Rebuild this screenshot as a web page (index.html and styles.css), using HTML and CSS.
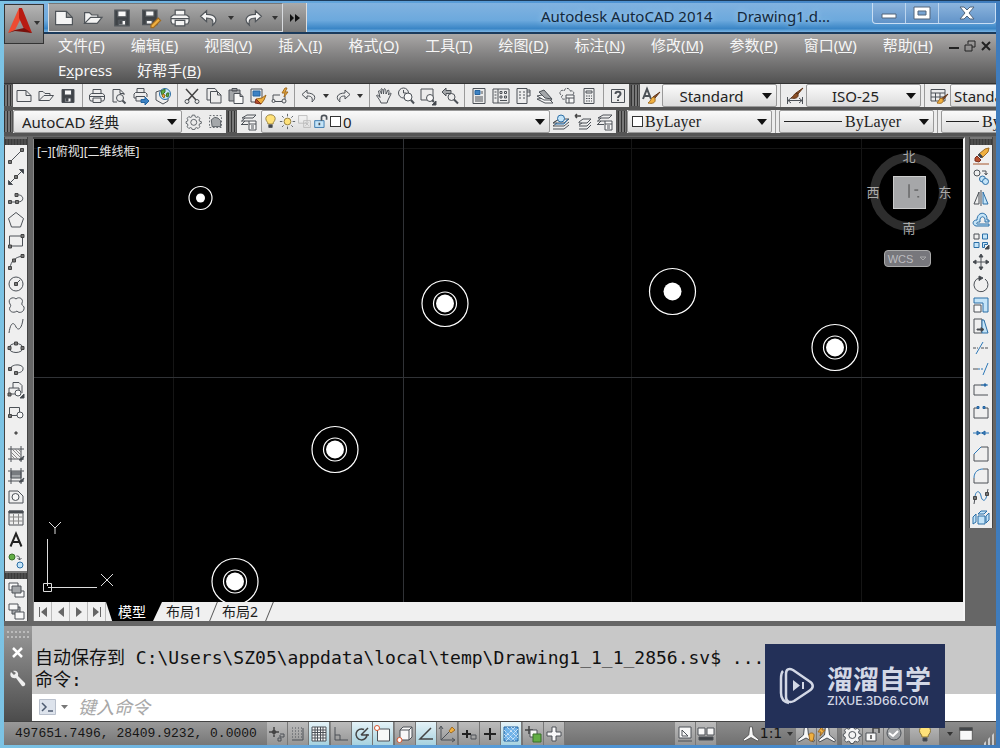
FILE: index.html
```html
<!DOCTYPE html>
<html lang="zh-CN">
<head>
<meta charset="utf-8">
<title>Autodesk AutoCAD 2014</title>
<link rel="stylesheet" href="styles.css">
</head>
<body>
<svg class="sprite" aria-hidden="true">
  <symbol id="new" viewBox="0 0 20 20"><path d="M3 4.500h9l5 5v6H3zM12 4.500v5h5"/></symbol>
  <symbol id="open" viewBox="0 0 20 20"><path d="M3 14.500v-9h4l2 2h5v2M3 14.500l5-5h9.500l-4 5z"/></symbol>
  <symbol id="save" viewBox="0 0 20 20"><path class="dark" d="M4 3.500h12v13H4z"/><path class="white" d="M6.500 4h7v5h-7zM7 12h6v4H7z"/><path class="dark" d="M8 12h2v3H8z"/></symbol>
  <symbol id="saveas" viewBox="0 0 20 20"><path class="dark" d="M3 3.500h12v12H3z"/><path class="white" d="M5.500 4h7v4.500h-7zM6 12h5v3H6z"/><path class="gold" d="M10 16l6-6 2 2-6 6h-2z"/></symbol>
  <symbol id="print" viewBox="0 0 20 20"><path d="M6 8V3.500h8V8M6 15H3.500L2.500 13V9l2-1.500h11l2 1.500v4l-1 2H14M6 12h8v4.500H6zM3 10.500h14"/></symbol>
  <symbol id="preview" viewBox="0 0 20 20"><path d="M8 16H4V3.500h7l4 4V9M11 3.500v4h4"/><circle cx="11" cy="12" r="3.500"/><path class="thick" d="M13.500 14.500l3 3"/></symbol>
  <symbol id="publish" viewBox="0 0 20 20"><path d="M6 7V2.500h7V7M5 12H3V8l1.500-1.500h10L16 8v3M5 10.500h9M5 10.500V15h5"/><path class="bluefill" d="M10 13.500h4V11l4 4-4 4v-2.500h-4z"/></symbol>
  <symbol id="globe" viewBox="0 0 20 20"><path d="M3 6l6-2 6 4v7l-5 3-7-4z"/><circle class="sky" cx="12" cy="8" r="5.500"/><path class="greenfill" d="M8 5l4-2v3l-3 3zM14 7l2 0-1 4-2-1z"/><path class="gold" d="M10 8l2 1-1 3-2-2z"/></symbol>
  <symbol id="cut" viewBox="0 0 20 20"><path class="med" d="M4 3l10 11M16 3L6 14"/><circle cx="5" cy="15.500" r="2"/><circle cx="15" cy="15.500" r="2"/></symbol>
  <symbol id="copy" viewBox="0 0 20 20"><path d="M6 14H3V2.500h8L13 5M6.500 5.500h7l3.500 3.500v8H6.500zM13.500 5.500V9H17"/></symbol>
  <symbol id="paste" viewBox="0 0 20 20"><path class="grey" d="M3 4h11v11H3z"/><path d="M6 2.500h5V5H6z"/><path class="white" d="M8 7.500h6l3 3v7H8zM14 7.500v3h3"/></symbol>
  <symbol id="match" viewBox="0 0 20 20"><path d="M3 3h11v13H3z"/><path class="bluefill" d="M5 5h7v5H5z"/><path class="gold" d="M8 13l6-1 4-3-2 5-3 4z"/><path class="red" d="M8 13l5 5-6-1z"/></symbol>
  <symbol id="blockedit" viewBox="0 0 20 20"><path d="M3 14V9h7M5 15.500h7M15 10v3"/><circle cx="3.500" cy="15" r="1.500"/><circle cx="14" cy="15" r="2"/><path class="gold" d="M15 2l-3 5h3l-1 4 4-5h-3l2-4z"/></symbol>
  <symbol id="undo" viewBox="0 0 20 20"><path d="M8 4L3 8.500 8 13v-3c4 0 6 1 5 6 5-4 3-9-5-9z"/></symbol>
  <symbol id="redo" viewBox="0 0 20 20"><path d="M12 4l5 4.500-5 4.500v-3c-4 0-6 1-5 6-5-4-3-9 5-9z"/></symbol>
  <symbol id="pan" viewBox="0 0 20 20"><path d="M7 17c-1-3-3-5-4.500-7.500 1-1 2 0 3.500 2L4.500 5c1-1 2 0 3 3L7 3c1-1 2 0 2.500 5l.5-5c1-1 2 0 2 5l2-4c1.500 0 1 2 .5 5l2-2c1 0 .5 1-.5 3l-2 4-1 3z"/></symbol>
  <symbol id="zoomrt" viewBox="0 0 20 20"><circle cx="7.500" cy="7" r="5"/><path d="M7.500 4v3h3"/><circle class="white" cx="12" cy="11" r="4"/><path class="thick" d="M15 14l3 3.500"/></symbol>
  <symbol id="zoomwin" viewBox="0 0 20 20"><path d="M3 3h12v11H3z"/><circle class="white" cx="12" cy="12" r="3.500"/><path class="thick" d="M14 14l2 2"/><path class="dark" d="M18 15v4h-4z"/></symbol>
  <symbol id="zoomprev" viewBox="0 0 20 20"><path class="grey" d="M2 6l4-4v2.500h5v3H6V10z"/><circle cx="11.500" cy="11" r="3.500"/><path class="thick" d="M14 13.500l4 4"/></symbol>
  <symbol id="props" viewBox="0 0 20 20"><path d="M4 2.500h12v15H4z"/><path class="bluefill" d="M6 4.500h5v4H6z"/><path d="M13 5v3M6 11h8M6 13h8M6 15h8"/></symbol>
  <symbol id="dc" viewBox="0 0 20 20"><path d="M2 3h16v14H2zM7 3v14M3.500 6h2M3.500 9h2M3.500 12h2M9 5.500h2v2H9zM13.500 5.500h2v2h-2zM9 10h2v2H9zM13.500 10h2v2h-2zM9 14.500h7"/></symbol>
  <symbol id="palette" viewBox="0 0 20 20"><path d="M4 2.500h10v15H4zM6 6h2M10 6h2M6 9h2M10 9h2M6 12h2M10 12h2M14 4h3v6h-3M14 6h3"/></symbol>
  <symbol id="sheets" viewBox="0 0 20 20"><path class="white" d="M2 13l8 4h8l-5-5z"/><path class="white" d="M2 10l7 4h8L12 8z"/><path class="grey" d="M4 6l6 6 7 1-8-9z"/></symbol>
  <symbol id="markup" viewBox="0 0 20 20"><path d="M4 9c-3-3 1-6 3-4 1-4 6-3 6 0 4-1 5 3 2 4M6 9c-3 2-1 5 2 4" stroke-dasharray="3 1"/><path class="white" d="M9 9h8v8H9zM9 12h8M12 12v5"/></symbol>
  <symbol id="calc" viewBox="0 0 20 20"><path d="M5 2.500h10v15H5zM7 5h6v2H7z"/><path d="M7 10h1.500M9.500 10H11M12 10h1M7 12.500h1.500M9.500 12.500H11M12 12.500h1M7 15h1.500M9.500 15H11M12 15h1"/></symbol>
  <symbol id="help" viewBox="0 0 20 20"><path d="M3.500 3.500h13v13h-13z"/><path class="thick" d="M7.500 8c0-3 5-3 5 0 0 2-2.500 1.500-2.500 4M10 13.500v1.500"/></symbol>
  <symbol id="textstyle" viewBox="0 0 20 20"><path class="thick" d="M2 13L6 3l4 10M3.500 10h5"/><path class="brown" d="M19 6l-5 6-2-1z"/><path class="gold" d="M14 12l-2-1c-2 1-2 4-5 6 4 1 8 0 7-4z"/></symbol>
  <symbol id="dimstyle" viewBox="0 0 20 20"><path d="M2.500 11v7M17.500 11v7M3 14.500h14M6 12l-3 2.500L6 17M14 12l3 2.500-3 2.500"/><path class="brown" d="M18 2l-5 6-2-1zM13 8l-2-1c-2 1-3 4-5 5 4 1 8 0 7-4z"/></symbol>
  <symbol id="tablestyle" viewBox="0 0 20 20"><path d="M2 3.500h14V15H2zM2 7h14M6.500 7v8M11 7v8M2 11h14"/><path class="brown" d="M19 8l-5 6-2-1z"/><path class="gold" d="M14 13l-2-1c-2 1-2 3-4 5 4 1 7 0 6-4z"/></symbol>
  <symbol id="gear" viewBox="0 0 20 20"><path d="M8.500 2.500h3l.5 2 1.500.7 2-1 2 2-1 2 .7 1.500 2 .5v2l-2 .5-.7 1.500 1 2-2 2-2-1-1.500.7-.5 1.600h-3l-.5-1.600-1.500-.7-2 1-2-2 1-2-.7-1.500-1.500-.5v-2l1.500-.5.7-1.500-1-2 2-2 2 1L8 4.500z"/><circle cx="10.300" cy="11" r="3.500"/></symbol>
  <symbol id="wsave" viewBox="0 0 20 20"><path d="M3 3h14v14H3z" stroke-dasharray="2 2"/><path class="grey" d="M5 8l4-3 4 1 3 3v7H6z"/></symbol>
  <symbol id="layers" viewBox="0 0 20 20"><path d="M8 3l-5 3h11l3-3zM3 9h7M6 6L2 9.500M3 12.500h6M6 9l-4 4"/><path class="white" d="M10 9h7v9h-7zM10 12h7M12 14h3M12 16h3"/></symbol>
  <symbol id="layercur" viewBox="0 0 20 20"><path d="M2 17h11l5-4M2 14h11l5-4M2 14l4-3M2 11h11l5-4H8l-6 4zM8 7l-6 4"/><circle class="sky" cx="10" cy="6.500" r="3.500"/><path class="blue" d="M4 12h9l4-5"/></symbol>
  <symbol id="layerprev" viewBox="0 0 20 20"><path class="med" d="M2 4h6M2 4l2-2M2 4l2 2"/><path d="M6 10l4-3h8l-4 4H6zM6 13l3-2M6 14h8l4-4M6 17h8l4-4"/></symbol>
  <symbol id="bulb" viewBox="0 0 20 20"><path class="yellow" d="M7 13c0-3-2.500-3-2.500-6.500 0-6 11-6 11 0C15.500 10 13 10 13 13z"/><path class="dark" d="M8 14h4v3H8z"/></symbol>
  <symbol id="sun" viewBox="0 0 20 20"><circle class="yellow" cx="10" cy="10" r="4"/><path d="M10 1v3M10 16v3M1 10h3M16 10h3M3.500 3.500l2 2M14.500 14.500l2 2M16.500 3.500l-2 2M3.500 16.500l2-2"/></symbol>
  <symbol id="freeze" viewBox="0 0 20 20"><path class="faint" d="M3 3h10v9H3zM9 9h8v8H9zM11 11l4 4M15 11l-4 4"/></symbol>
  <symbol id="unlock" viewBox="0 0 20 20"><path class="sky" d="M2 9h11v8H2z"/><path class="thick" d="M10 9V5c0-3 6-3 6 0v3M7.500 11.500v3"/></symbol>
  <symbol id="line" viewBox="0 0 20 20"><path d="M4 16L16 4"/><path class="node" d="M2.500 14.500h3v3h-3zM14.500 2.500h3v3h-3z"/></symbol>
  <symbol id="xline" viewBox="0 0 20 20"><path d="M4 16L16 4"/><path class="dark" d="M2.500 17.500v-4l4 4zM17.500 2.500v4l-4-4z"/><path class="node" d="M8.500 8.500h3v3h-3z"/></symbol>
  <symbol id="pline" viewBox="0 0 20 20"><path d="M4 14h8c7 0 6-8-1-7"/><path class="node" d="M2.500 12.500h3v3h-3zM9 5.500h3v3H9zM9.500 12.500h3v3h-3z"/></symbol>
  <symbol id="polygon" viewBox="0 0 20 20"><path d="M10 2.500l7.500 6-3 8.500h-9l-3-8.500z"/></symbol>
  <symbol id="rect" viewBox="0 0 20 20"><path d="M3.500 5h13v10h-13z"/><path class="node" d="M2.500 14h3v3h-3zM15 3.500h3v3h-3z"/></symbol>
  <symbol id="arc" viewBox="0 0 20 20"><path d="M4 16c1-7 5-11 13-12"/><path class="node" d="M2.500 14.500h3v3h-3zM6.500 7h3v3h-3zM15 2.500h3v3h-3z"/></symbol>
  <symbol id="circle" viewBox="0 0 20 20"><circle cx="10" cy="10" r="7"/><path d="M10 10l4-4"/><path class="node" d="M8.500 8.500h3v3h-3z"/></symbol>
  <symbol id="cloud" viewBox="0 0 20 20"><path d="M10 4c3-3 8 0 6 4-1 2 1 2 2 4 1 5-5 7-7 4-4 3-9 0-7-4 1-1 1-1 0-3-3-5 3-8 6-5z"/></symbol>
  <symbol id="spline" viewBox="0 0 20 20"><path d="M3 17c2-14 6-9 7-6 3 5 6 0 7-8"/></symbol>
  <symbol id="ellipse" viewBox="0 0 20 20"><ellipse cx="10" cy="10" rx="7" ry="4.500"/><path class="node" d="M2 8.500h3v3H2zM15 8.500h3v3h-3zM8.500 4h3v3h-3z"/></symbol>
  <symbol id="earc" viewBox="0 0 20 20"><path d="M4 10c2-6 14-5 13 0 0 3-4 4-7 4"/><path class="node" d="M2.500 8.500h3v3h-3zM8.500 12.500h3v3h-3z"/></symbol>
  <symbol id="insert" viewBox="0 0 20 20"><path d="M7 8V2.500h6l3 3V13M3 8h10v6H3z"/><circle class="white" cx="12" cy="13" r="3"/><path class="node" d="M2 13h3v3H2z"/><path class="dark" d="M18 14v4h-4z"/></symbol>
  <symbol id="block" viewBox="0 0 20 20"><path d="M3.500 5.500h10v8h-10z"/><circle class="white" cx="14" cy="13" r="3"/><path class="node" d="M2.500 12.500h3v3h-3z"/></symbol>
  <symbol id="point" viewBox="0 0 20 20"><path class="node" d="M9 9h2v2H9z"/></symbol>
  <symbol id="hatch" viewBox="0 0 20 20"><path d="M2 5h16M2 15h16M5 2v16M15 2v16"/><path class="thin" d="M5 8l7 7M5 11l4 4M6 5l9 9M9 5l6 6M12 5l3 3"/><path class="dark" d="M13 16l5-4-2 4z"/></symbol>
  <symbol id="gradient" viewBox="0 0 20 20"><path class="grey" d="M5 6h10v6H5z"/><path d="M2 5h16M2 15h16M5 2v16M15 2v16M5 8h10"/><path class="dark" d="M13 16l5-4-2 4z"/></symbol>
  <symbol id="region" viewBox="0 0 20 20"><path d="M3 4h9l5 5v7H3z"/><circle class="white" cx="9.500" cy="10" r="3.500"/></symbol>
  <symbol id="table" viewBox="0 0 20 20"><path class="dark" d="M3 3h14v2H3z"/><path d="M3 3h14v14H3z"/><path class="thin" d="M3.500 9h13M3.500 13h13M7.500 6v10.500M12.500 6v10.500"/></symbol>
  <symbol id="mtext" viewBox="0 0 20 20"><path class="bold" d="M4.500 16.500L10 3.500l5.500 13M6.500 12h7"/></symbol>
  <symbol id="addsel" viewBox="0 0 20 20"><circle class="greenfill" cx="6" cy="6" r="3"/><circle class="sky" cx="14" cy="14" r="3"/><path d="M10.500 5c3 0 3 1 3 4M11.500 7l2 2 2-2"/></symbol>
  <symbol id="order1" viewBox="0 0 20 20"><path class="white" d="M3 3h9v7H3zM9 11h9v6H9z"/><path class="grey" d="M6 6h9v7H6z"/></symbol>
  <symbol id="order2" viewBox="0 0 20 20"><path class="grey" d="M6 6h8v7H6z"/><path class="white" d="M3 3h9v6H3zM9 11h9v7H9z"/></symbol>
  <symbol id="erase" viewBox="0 0 20 20"><path class="gold" d="M8 8l6-5 4-1-1 4-6 6z"/><path class="dark" d="M7 9l3 3 1.500-1.500-3-3z"/><path class="red" d="M6 10l4 4-2 2-4-1v-3z"/><path class="brownline" d="M2 18h16"/></symbol>
  <symbol id="mcopy" viewBox="0 0 20 20"><circle cx="6" cy="6" r="3"/><circle class="sky" cx="11.500" cy="12" r="3"/><circle class="sky" cx="14.500" cy="14.500" r="3"/><path d="M11 4h4v3M13.500 6l1.500 2 1.500-2"/></symbol>
  <symbol id="mirror" viewBox="0 0 20 20"><path d="M8 4v12H3zM10 2v16"/><path class="sky" d="M12 4v12h5z"/></symbol>
  <symbol id="offset" viewBox="0 0 20 20"><path class="sky" d="M5 16c-4-1-4-6 1-6 0-9 11-9 10 0h2v2h-4c1-7-6-7-5 0-3 0-4 1-3 2h12v2z"/></symbol>
  <symbol id="array" viewBox="0 0 20 20"><path d="M3 3h5v5H3z"/><path class="sky" d="M11.500 3h5v5h-5zM3 11.500h5v5H3zM11.500 11.500h5v2h-3v3h-2z"/><path class="dark" d="M18 14v4h-4z"/></symbol>
  <symbol id="move" viewBox="0 0 20 20"><path d="M10 3v5M10 12v5M3 10h5M12 10h5"/><path class="dark" d="M10 2l2 3H8zM10 18l2-3H8zM2 10l3-2v4zM18 10l-3-2v4z"/><path d="M9 9h2v2H9z"/></symbol>
  <symbol id="rotate" viewBox="0 0 20 20"><path d="M8 4a7 7 0 1 0 6 1"/><path class="dark" d="M8 2l4 2-4 2.500z"/></symbol>
  <symbol id="scale" viewBox="0 0 20 20"><path class="sky" d="M3 3h14v14h-5V8H3z"/><path class="white" d="M3 10h7v7H3z"/></symbol>
  <symbol id="stretch" viewBox="0 0 20 20"><path d="M3 3h8v14H3z"/><path class="sky" d="M11 4h2l4 13h-6z"/><path class="dark" d="M6 13h4v-1.500l3 2-3 2V14H6z"/></symbol>
  <symbol id="trim" viewBox="0 0 20 20"><path d="M2 10h5M10 10h8" stroke-dasharray="3 1"/><path class="blue" d="M5 16l7-12"/></symbol>
  <symbol id="extend" viewBox="0 0 20 20"><path d="M2 10h5"/><path class="blue" d="M7 10h6" stroke-dasharray="2 1"/><path class="blue" d="M12 16l5-12"/></symbol>
  <symbol id="breakpt" viewBox="0 0 20 20"><path d="M12 5H3v10h14"/><path class="blue" d="M10 5h7"/><path class="bluefill" d="M13 4h2v2h-2z"/></symbol>
  <symbol id="break" viewBox="0 0 20 20"><path d="M6 6H3v10h14V6h-3"/><path class="bluefill" d="M6 4.500h2v2H6zM12 4.500h2v2h-2z"/></symbol>
  <symbol id="join" viewBox="0 0 20 20"><path class="blue" d="M2 10h16"/><path class="bluefill" d="M6 8l3 2-3 2zM14 8l-3 2 3 2z"/></symbol>
  <symbol id="chamfer" viewBox="0 0 20 20"><path d="M3 10v7h14V3h-7"/><path class="blue" d="M3 10l7-7"/></symbol>
  <symbol id="fillet" viewBox="0 0 20 20"><path d="M3 12v5h14V3h-5"/><path class="blue" d="M3 12c0-6 4-9 9-9"/></symbol>
  <symbol id="blend" viewBox="0 0 20 20"><path class="blue" d="M4 11c0-8 5-8 6-2s5 6 6-2"/><path d="M3 17l1-6M16 7l1-5"/><path class="node" d="M2.500 9.500h3v3h-3zM14.500 5.500h3v3h-3z"/></symbol>
  <symbol id="explode" viewBox="0 0 20 20"><path class="sky" d="M7 8h7v8H7zM7 6l3-3h6l-3 3zM15 8l3-3v7l-3 3zM2 9l3-3v8l-3 2z"/></symbol>
  <symbol id="infer" viewBox="0 0 20 20"><path class="med" d="M2 8h10M7 3v10M5 8l2-2 2 2-2 2z"/><path d="M13 10h4v3h-4M11 14h3v3h-3zM13 11v2"/></symbol>
  <symbol id="snap" viewBox="0 0 20 20"><path d="M4 4h10M4 7h10M4 10h10M4 13h10" stroke-dasharray="1 2"/><path d="M15 4v12H4"/></symbol>
  <symbol id="grid" viewBox="0 0 20 20"><path class="white" d="M3 3h14v14H3zM3 6h14M3 8.500h14M3 11h14M3 14h14M6 3v14M8.500 3v14M11.500 3v14M14 3v14"/></symbol>
  <symbol id="ortho" viewBox="0 0 20 20"><path d="M4 3v13h13M4 11h5v5"/></symbol>
  <symbol id="polar" viewBox="0 0 20 20"><path class="med" d="M15 10a5.500 5.500 0 1 1-3-4.500M9 11l7-7M9 11h8"/></symbol>
  <symbol id="osnap" viewBox="0 0 20 20"><path class="white" d="M4.500 5h12v12h-12z"/><circle class="orange" cx="4" cy="4" r="2.500"/></symbol>
  <symbol id="osnap3" viewBox="0 0 20 20"><path class="white" d="M5 6l3-3h9v10l-3 3H5zM5 6h9v10M14 6l3-3"/><circle class="orange" cx="4.500" cy="16" r="2.500"/></symbol>
  <symbol id="otrack" viewBox="0 0 20 20"><path class="med" d="M15 4L4 15h13"/></symbol>
  <symbol id="ducs" viewBox="0 0 20 20"><path d="M4 3v13h13M4 16l8-8M2 5l2-3 2 3M15 14l3 2-3 2"/><path class="gold" d="M12 7l3-4 3 3-4 3z"/></symbol>
  <symbol id="dyn" viewBox="0 0 20 20"><path class="bold" d="M3 10h9M8 6v8"/><path d="M12 11h5v4h-5z"/></symbol>
  <symbol id="plus" viewBox="0 0 20 20"><path class="bold" d="M4 10h12M10 4v12"/></symbol>
  <symbol id="transp" viewBox="0 0 20 20"><path class="bluefill light" d="M3 3h14v14H3z"/><path class="wline" d="M3 6l11 11M3 10l7 7M6 3l11 11M10 3l7 7M14 3L3 14M17 5L5 17M17 10l-7 7" stroke-dasharray="1 1"/></symbol>
  <symbol id="qp" viewBox="0 0 20 20"><path class="med" d="M2 6h8M6 2v8"/><path class="white" d="M7 6h7v7H7z"/><path class="greenfill" d="M10 10h8v8h-8z"/></symbol>
  <symbol id="selcycle" viewBox="0 0 20 20"><path class="white" d="M8 3h4v5h5v4h-5v5H8v-5H3V8h5z"/></symbol>
  <symbol id="modelbtn" viewBox="0 0 20 20"><path class="white" d="M4 3h12v11H4z"/><path d="M7 6v6h6zM3 17h14"/></symbol>
  <symbol id="quickview" viewBox="0 0 20 20"><path class="white" d="M2 4h7v7H2zM11 4h7v7h-7z"/><path class="dark" d="M3 13h14v3H3z"/></symbol>
  <symbol id="annot" viewBox="0 0 20 20"><path class="white" d="M8.500 2h3l1 9 6 5-1 2-7.500-4-7.500 4-1-2 6-5z"/></symbol>
  <symbol id="annotvis" viewBox="0 0 20 20"><path class="white" d="M8.500 2h3l1 9 6 5-1 2-7.500-4-7.500 4-1-2 6-5z"/><path class="gold" d="M13 12c-1-4 6-4 5 0l-1 5h-3z"/></symbol>
  <symbol id="annotauto" viewBox="0 0 20 20"><path class="white" d="M8.500 2h3l1 9 6 5-1 2-7.500-4-7.500 4-1-2 6-5z"/><path class="gold" d="M6 1L1 8h3l-1 4 5-6H5z"/></symbol>
  <symbol id="statuslock" viewBox="0 0 20 20"><path class="white" d="M3 9h10v8H3z"/><path class="med" d="M10 9V4h6v5M8 11v4"/></symbol>
  <symbol id="ball" viewBox="0 0 20 20"><circle class="grey" cx="10" cy="9" r="7"/><path class="wline thick" d="M5 9l4 3 5-5"/></symbol>
  <symbol id="clean" viewBox="0 0 20 20"><path class="white" d="M3 3h14v14H3z"/><path class="dark" d="M3 3h14v3H3z"/></symbol>
</svg>

<div class="window">
  <header class="titlebar">
    <button class="app-button" aria-label="应用程序菜单">
      <svg viewBox="0 0 38 38"><path fill="#ed4b32" d="M14 3L3 28l7-3 5-10z"/><path fill="#b81b12" d="M14 3h3l10 25-7-2-6-13z"/><path fill="#79110c" d="M3 28l7-3 9-2 8 5-8-1-9-1z"/><path fill="#333" d="M29 16h6l-3 4z"/></svg>
    </button>
    <div class="quick">
      <button aria-label="新建"><svg><use href="#new"/></svg></button>
      <button aria-label="打开"><svg><use href="#open"/></svg></button>
      <button aria-label="保存"><svg><use href="#save"/></svg></button>
      <button aria-label="另存为"><svg><use href="#saveas"/></svg></button>
      <button aria-label="打印"><svg><use href="#print"/></svg></button>
      <button aria-label="放弃"><svg><use href="#undo"/></svg></button>
      <button class="mini" aria-label="放弃列表"></button>
      <button aria-label="重做"><svg><use href="#redo"/></svg></button>
      <button class="mini" aria-label="重做列表"></button>
    </div>
    <button class="more" aria-label="更多"><svg viewBox="0 0 12 10"><path d="M1 1v8l4-4zM6 1v8l5-4z"/></svg></button>
    <h1 class="caption"><span>Autodesk AutoCAD 2014</span><span>Drawing1.d...</span></h1>
    <div class="winbtns">
      <button aria-label="最小化"><svg viewBox="0 0 20 16"><path d="M3 9h14v4H3z"/></svg></button>
      <button aria-label="最大化"><svg viewBox="0 0 20 16"><path fill-rule="evenodd" d="M2 2h16v12H2zM6 6v4h8V6z"/></svg></button>
      <button class="close" aria-label="关闭"><svg viewBox="0 0 20 16"><path d="M3 2h4l3 3 3-3h4l-5 6 5 6h-4l-3-3-3 3H3l5-6z"/></svg></button>
    </div>
  </header>

  <nav class="menu">
    <div class="menu-row">
      <button>文件(<u>F</u>)</button><button>编辑(<u>E</u>)</button><button>视图(<u>V</u>)</button><button>插入(<u>I</u>)</button><button>格式(<u>O</u>)</button><button>工具(<u>T</u>)</button><button>绘图(<u>D</u>)</button><button>标注(<u>N</u>)</button><button>修改(<u>M</u>)</button><button>参数(<u>P</u>)</button><button>窗口(<u>W</u>)</button><button>帮助(<u>H</u>)</button>
    </div>
    <div class="menu-row second"><button>E<u>x</u>press</button><button>好帮手(<u>B</u>)</button></div>
    <div class="docbtns">
      <button aria-label="最小化图形"><svg viewBox="0 0 12 12"><path d="M1 8h10" stroke-width="2"/></svg></button>
      <button aria-label="还原图形"><svg viewBox="0 0 12 12"><path d="M4 4V1h7v6H8M1 5h7v6H1z"/></svg></button>
      <button aria-label="关闭图形"><svg viewBox="0 0 12 12"><path d="M2 2l8 8M10 2l-8 8" stroke-width="2"/></svg></button>
    </div>
  </nav>

  <div class="bar">
    <i class="grip"></i>
    <div class="strip">
      <button aria-label="新建"><svg><use href="#new"/></svg></button><button aria-label="打开"><svg><use href="#open"/></svg></button><button aria-label="保存"><svg><use href="#save"/></svg></button>
      <i class="sep"></i>
      <button aria-label="打印"><svg><use href="#print"/></svg></button><button aria-label="预览"><svg><use href="#preview"/></svg></button><button aria-label="发布"><svg><use href="#publish"/></svg></button><button aria-label="三维 DWF"><svg><use href="#globe"/></svg></button>
      <i class="sep"></i>
      <button aria-label="剪切"><svg><use href="#cut"/></svg></button><button aria-label="复制"><svg><use href="#copy"/></svg></button><button aria-label="粘贴"><svg><use href="#paste"/></svg></button><button aria-label="特性匹配"><svg><use href="#match"/></svg></button><button aria-label="块编辑器"><svg><use href="#blockedit"/></svg></button>
      <i class="sep"></i>
      <button aria-label="放弃"><svg><use href="#undo"/></svg></button><button class="mini" aria-label="放弃列表"></button><button aria-label="重做"><svg><use href="#redo"/></svg></button><button class="mini" aria-label="重做列表"></button>
      <i class="sep"></i>
      <button aria-label="平移"><svg><use href="#pan"/></svg></button><button aria-label="实时缩放"><svg><use href="#zoomrt"/></svg></button><button aria-label="窗口缩放"><svg><use href="#zoomwin"/></svg></button><button aria-label="缩放上一个"><svg><use href="#zoomprev"/></svg></button>
      <i class="sep"></i>
      <button aria-label="特性"><svg><use href="#props"/></svg></button><button aria-label="设计中心"><svg><use href="#dc"/></svg></button><button aria-label="工具选项板"><svg><use href="#palette"/></svg></button><button aria-label="图纸集"><svg><use href="#sheets"/></svg></button><button aria-label="标记集"><svg><use href="#markup"/></svg></button><button aria-label="计算器"><svg><use href="#calc"/></svg></button>
      <i class="sep"></i>
      <button aria-label="帮助"><svg><use href="#help"/></svg></button>
    </div>
    <i class="grip"></i>
    <div class="strip">
      <button aria-label="文字样式"><svg><use href="#textstyle"/></svg></button>
      <label class="combo style"><select class="mid" aria-label="文字样式列表"><option>Standard</option></select></label>
      <i class="sep"></i>
      <button aria-label="标注样式"><svg><use href="#dimstyle"/></svg></button>
      <label class="combo style"><select class="mid" aria-label="标注样式列表"><option>ISO-25</option></select></label>
      <i class="sep"></i>
      <button aria-label="表格样式"><svg><use href="#tablestyle"/></svg></button>
      <label class="combo style"><select class="tight" aria-label="表格样式列表"><option>Standard</option></select></label>
    </div>
  </div>

  <div class="bar">
    <i class="grip"></i>
    <div class="strip">
      <label class="combo workspace-name"><select aria-label="工作空间"><option>AutoCAD 经典</option></select></label>
      <button aria-label="工作空间设置"><svg class="small"><use href="#gear"/></svg></button><button aria-label="我的工作空间"><svg class="small"><use href="#wsave"/></svg></button>
    </div>
    <i class="grip"></i>
    <div class="strip">
      <button class="wide" aria-label="图层特性"><svg><use href="#layers"/></svg></button>
      <label class="combo layer">
        <span class="layer-icons"><svg class="small"><use href="#bulb"/></svg><svg class="small"><use href="#sun"/></svg><svg class="small"><use href="#freeze"/></svg><svg class="small"><use href="#unlock"/></svg><i class="swatch"></i></span>
        <select aria-label="图层"><option>0</option></select>
      </label>
      <button aria-label="置为当前"><svg><use href="#layercur"/></svg></button><button aria-label="上一个图层"><svg><use href="#layerprev"/></svg></button><button aria-label="图层状态"><svg><use href="#layers"/></svg></button>
    </div>
    <i class="grip"></i>
    <div class="strip">
      <label class="combo color"><i class="swatch"></i><select class="serif" aria-label="颜色"><option>ByLayer</option></select></label>
      <i class="sep"></i>
      <label class="combo ltype"><i class="rule"></i><select class="serif" aria-label="线型"><option>ByLayer</option></select></label>
      <i class="sep"></i>
      <label class="combo lweight"><i class="rule"></i><select class="serif" aria-label="线宽"><option>ByLayer</option></select></label>
    </div>
  </div>

  <main class="work">
    <aside class="side">
      <div class="palette">
        <i class="handle"></i>
        <div class="tools">
          <button aria-label="直线"><svg><use href="#line"/></svg></button><button aria-label="构造线"><svg><use href="#xline"/></svg></button><button aria-label="多段线"><svg><use href="#pline"/></svg></button><button aria-label="多边形"><svg><use href="#polygon"/></svg></button><button aria-label="矩形"><svg><use href="#rect"/></svg></button><button aria-label="圆弧"><svg><use href="#arc"/></svg></button><button aria-label="圆"><svg><use href="#circle"/></svg></button><button aria-label="修订云线"><svg><use href="#cloud"/></svg></button><button aria-label="样条曲线"><svg><use href="#spline"/></svg></button><button aria-label="椭圆"><svg><use href="#ellipse"/></svg></button><button aria-label="椭圆弧"><svg><use href="#earc"/></svg></button><button aria-label="插入块"><svg><use href="#insert"/></svg></button><button aria-label="创建块"><svg><use href="#block"/></svg></button><button aria-label="点"><svg><use href="#point"/></svg></button><button aria-label="图案填充"><svg><use href="#hatch"/></svg></button><button aria-label="渐变色"><svg><use href="#gradient"/></svg></button><button aria-label="面域"><svg><use href="#region"/></svg></button><button aria-label="表格"><svg><use href="#table"/></svg></button><button aria-label="多行文字"><svg><use href="#mtext"/></svg></button><button aria-label="添加选定对象"><svg><use href="#addsel"/></svg></button>
        </div>
      </div>
      <div class="palette">
        <i class="handle"></i>
        <div class="tools"><button aria-label="前置"><svg><use href="#order1"/></svg></button><button aria-label="后置"><svg><use href="#order2"/></svg></button></div>
      </div>
    </aside>

    <section class="document">
      <div class="canvas">
        <svg class="drawing" aria-label="图形">
          <g class="gridlines"><path d="M139.500 0v1000M597.500 0v1000M827.500 0v1000M0 9.500h3000"/><path class="major" d="M369.500 0v1000M0 238.500h3000"/></g>
          <g class="rings">
            <circle cx="166.500" cy="59" r="11.500"/><circle cx="411" cy="164.500" r="23"/><circle cx="411" cy="164.500" r="11.500"/><circle cx="638.500" cy="152.500" r="23"/><circle cx="801" cy="208.500" r="23"/><circle cx="801" cy="208.500" r="11.500"/><circle cx="301" cy="310.500" r="23"/><circle cx="301" cy="310.500" r="11.500"/><circle cx="201" cy="442.500" r="23"/><circle cx="201" cy="442.500" r="11.500"/>
          </g>
          <g class="dots"><circle cx="166.500" cy="59" r="4.500"/><circle cx="411" cy="164.500" r="9"/><circle cx="638.500" cy="152.500" r="9"/><circle cx="801" cy="208.500" r="9"/><circle cx="301" cy="310.500" r="9"/><circle cx="201" cy="442.500" r="9"/></g>
        </svg>
        <svg class="ucs" viewBox="0 0 84 76" aria-label="坐标系"><path d="M13.500 19v47M14 67.500h49M9.500 63.500h8v8h-8zM15 2l6 6 6-6M21 8v6M67 54l12 12M79 54L67 66"/></svg>
        <div class="viewlabel"><button>[−]</button><button>[俯视]</button><button>[二维线框]</button></div>
        <div class="compass">
          <span class="n">北</span><span class="w">西</span><button class="cube" aria-label="上"><svg viewBox="0 0 32 32"><path d="M15.500 8v14M21 14h4M24 21h2"/></svg></button><span class="e">东</span><span class="s">南</span>
        </div>
        <button class="wcs">WCS<svg viewBox="0 0 8 5"><path d="M1 1h6L4 4z"/></svg></button>
      </div>
      <div class="tabs">
        <button class="nav" aria-label="第一个"><svg viewBox="0 0 12 12"><path d="M2 1h1v10H2zM10 1v10L4 6z"/></svg></button><button class="nav" aria-label="上一个"><svg viewBox="0 0 12 12"><path d="M9 1v10L3 6z"/></svg></button><button class="nav" aria-label="下一个"><svg viewBox="0 0 12 12"><path d="M3 1v10l6-5z"/></svg></button><button class="nav" aria-label="最后一个"><svg viewBox="0 0 12 12"><path d="M2 1v10l6-5zM9 1h1v10H9z"/></svg></button>
        <button class="tab active">模型</button><button class="tab">布局1</button><button class="tab">布局2</button>
      </div>
    </section>

    <aside class="side right">
      <div class="palette">
        <i class="handle"></i>
        <div class="tools">
          <button aria-label="删除"><svg><use href="#erase"/></svg></button><button aria-label="复制对象"><svg><use href="#mcopy"/></svg></button><button aria-label="镜像"><svg><use href="#mirror"/></svg></button><button aria-label="偏移"><svg><use href="#offset"/></svg></button><button aria-label="阵列"><svg><use href="#array"/></svg></button><button aria-label="移动"><svg><use href="#move"/></svg></button><button aria-label="旋转"><svg><use href="#rotate"/></svg></button><button aria-label="缩放"><svg><use href="#scale"/></svg></button><button aria-label="拉伸"><svg><use href="#stretch"/></svg></button><button aria-label="修剪"><svg><use href="#trim"/></svg></button><button aria-label="延伸"><svg><use href="#extend"/></svg></button><button aria-label="打断于点"><svg><use href="#breakpt"/></svg></button><button aria-label="打断"><svg><use href="#break"/></svg></button><button aria-label="合并"><svg><use href="#join"/></svg></button><button aria-label="倒角"><svg><use href="#chamfer"/></svg></button><button aria-label="圆角"><svg><use href="#fillet"/></svg></button><button aria-label="光顺曲线"><svg><use href="#blend"/></svg></button><button aria-label="分解"><svg><use href="#explode"/></svg></button>
        </div>
      </div>
    </aside>
  </main>

  <section class="command">
    <div class="cmd-side">
      <i class="dots-handle"></i>
      <button aria-label="关闭命令行"><svg viewBox="0 0 18 18"><path d="M4 4l9 9M13 4l-9 9" stroke="#fff" stroke-width="2.500"/></svg></button>
      <button aria-label="自定义"><svg viewBox="0 0 18 18"><path fill="#eee" d="M2 2l3 3 2-2-3-2c3-1 6 1 5 5l7 7c1 2-1 4-3 3L7 8C3 9 0 6 2 2z"/></svg></button>
    </div>
    <div class="cmd-main">
      <div class="log"><p>自动保存到 C:\Users\SZ05\appdata\local\temp\Drawing1_1_1_2856.sv$ ...</p><p>命令:</p></div>
      <div class="prompt">
        <button class="recent" aria-label="最近使用的命令"><svg viewBox="0 0 32 18"><path fill="#dde3ec" stroke="#b9c0cc" d="M1.500 1.500h16v15h-16z"/><path fill="none" stroke="#4d5b70" stroke-width="1.500" d="M4 5l4 4-4 4M10 13h5"/><path fill="#777" d="M23 7h7l-3.500 4z"/></svg></button>
        <input type="text" aria-label="命令" placeholder="键入命令">
      </div>
    </div>
    <div class="brand">
      <svg viewBox="0 0 36 38"><g fill="none" stroke="#d3d8e6" stroke-width="2.500" stroke-linejoin="round"><path d="M7 7c0-5 3-6 7-4l16 11c5 3 5 7 0 10L15 34c-4 2-8 1-8-4z"/><path d="M4 4C2 6 2 8 2 12v14c0 6 3 9 8 10"/></g><path fill="#d3d8e6" d="M14 13v11l7-5.500zM23 15h2v7h-2z"/></svg>
      <div><b>溜溜自学</b><small>ZIXUE.3D66.COM</small></div>
    </div>
  </section>

  <footer class="status">
    <output class="coords">497651.7496, 28409.9232, 0.0000</output>
    <div class="toggles">
      <button aria-label="推断约束"><svg><use href="#infer"/></svg></button><button aria-label="捕捉"><svg><use href="#snap"/></svg></button><button class="on" aria-label="栅格"><svg><use href="#grid"/></svg></button><button aria-label="正交"><svg><use href="#ortho"/></svg></button><button class="on" aria-label="极轴"><svg><use href="#polar"/></svg></button><button class="on" aria-label="对象捕捉"><svg><use href="#osnap"/></svg></button><button aria-label="三维对象捕捉"><svg><use href="#osnap3"/></svg></button><button class="on" aria-label="对象捕捉追踪"><svg><use href="#otrack"/></svg></button><button aria-label="动态 UCS"><svg><use href="#ducs"/></svg></button><button aria-label="动态输入"><svg><use href="#dyn"/></svg></button><button aria-label="线宽"><svg><use href="#plus"/></svg></button><button class="on" aria-label="透明度"><svg><use href="#transp"/></svg></button><button aria-label="快捷特性"><svg><use href="#qp"/></svg></button><button aria-label="选择循环"><svg><use href="#selcycle"/></svg></button>
    </div>
    <div class="status-right">
      <div class="toggles space"><button aria-label="模型"><svg><use href="#modelbtn"/></svg></button><button aria-label="快速查看"><svg><use href="#quickview"/></svg></button></div>
      <button class="scale"><svg><use href="#annot"/></svg>1:1</button><button class="mini" aria-label="比例列表"></button>
      <div class="toggles"><button aria-label="注释可见性"><svg><use href="#annotvis"/></svg></button><button aria-label="自动添加比例"><svg><use href="#annotauto"/></svg></button></div>
      <div class="toggles"><button aria-label="切换工作空间"><svg class="pale"><use href="#gear"/></svg></button><button aria-label="锁定"><svg><use href="#statuslock"/></svg></button><button aria-label="性能"><svg><use href="#ball"/></svg></button></div>
      <div class="toggles"><button class="wide" aria-label="隔离对象"><svg><use href="#bulb"/></svg></button></div>
      <button class="mini" aria-label="状态栏菜单"></button>
      <button class="full" aria-label="全屏显示"><svg><use href="#clean"/></svg></button>
      <i class="resize"></i>
    </div>
  </footer>
</div>
</body>
</html>
```

FILE: styles.css
```css
*, *::before, *::after { box-sizing: border-box; }
body { margin: 0; font-family: "Noto Sans", "Noto Sans CJK SC", sans-serif; font-size: 15px; color: #1c1c1c; }
button { margin: 0; padding: 0; border: 0; background: none; color: inherit; font: inherit; display: flex; align-items: center; justify-content: center; flex: none; }
svg { display: block; fill: none; stroke: none; }
i { display: block; flex: none; }
.sprite { position: absolute; width: 0; height: 0; }

/* icon paint */
.dark { fill: #3f4347; }
.white { fill: #f8f8f8; }
.grey { fill: #a4a7aa; }
.gold { fill: #f0b040; stroke: #a06a20; }
.brown { fill: #8b4f25; stroke: #5f3418; stroke-width: 1; }
.brownline { stroke: #a5572c; }
.red { fill: #b8502c; stroke: #7b2c1c; }
.yellow { fill: #ffe27a; stroke: #8a7434; }
.orange { fill: #fff; stroke: #d8552e; }
.greenfill { fill: #62ad45; stroke: #38702a; }
.sky { fill: #c4e4f8; stroke: #2b6ea6; }
.blue { stroke: #2c78b8; }
.bluefill { fill: #3d82c4; stroke: #2565a0; }
.light { fill: #6fb2e8; }
.faint { stroke: #b8b8b8; }
.node { fill: #777; stroke: #444; stroke-width: 1; }
.thin { stroke-width: 1; stroke: #888; }
.med { stroke-width: 1.500; stroke: #444; }
.thick { stroke-width: 2; }
.bold { stroke-width: 2; stroke: #222; }
.wline { stroke: #fff; }

.window { min-height: 100vh; display: flex; flex-direction: column; padding: 2px 4px 3px; border-top: 1px solid #1d3c5c; background: linear-gradient(90deg, #7cc3e4 0, #64a6dc 30%, #4f94d4 60%, #3f7cbd 100%); overflow: hidden; }

/* title bar */
.titlebar { position: relative; display: flex; height: 31px; padding-left: 44px; background: linear-gradient(#81b2e0, #6ca9dd 60%, #3b86c6 88%, #79b4e4); border-bottom: 2px solid #1b3a5b; }
.app-button { position: absolute; z-index: 2; left: 0; top: 1px; width: 40px; height: 40px; border: 1px solid #333; background: linear-gradient(#b4b4b4, #777); }
.app-button svg { width: 38px; height: 38px; }
.quick { display: flex; align-items: center; border: 1px solid #d9dce0; border-top-color: #777; background: linear-gradient(#a9a9a9, #7c7c7c); }
.quick button { width: 29px; }
.quick svg { width: 24px; height: 24px; fill: #f4f4f4; stroke: #50555a; }
button.mini { width: 12px; }
.quick button.mini { width: 15px; }
.mini::before { content: ""; border: 3px solid transparent; border-top: 4px solid #333; border-bottom: 0; }
.more { width: 24px; background: linear-gradient(#aaa, #777); border-right: 1px solid #ddd; }
.more svg { width: 12px; height: 10px; fill: #111; }
.caption { flex: 1; display: flex; justify-content: flex-end; gap: 24px; margin: 0; padding-right: 42px; font-size: 15px; font-weight: 400; line-height: 26px; color: #12283c; white-space: nowrap; text-shadow: 0 0 6px #b4d6f2; }
.winbtns { display: flex; height: 21px; border: 1px solid #c8def4; border-top: 0; border-radius: 0 0 4px 4px; background: linear-gradient(#8db5de, #6193c8); }
.winbtns button { width: 33px; border-right: 1px solid #bcd5ee; }
.winbtns button.close { width: 56px; border: 0; }
.winbtns svg { width: 20px; height: 16px; fill: #fff; stroke: #52647a; }

/* menus */
.menu { position: relative; height: 50px; padding-left: 54px; background: linear-gradient(#aaa8a7, #858484 40%, #525252); color: #f6f6f6; border-bottom: 1px solid #333; }
.menu-row { display: flex; gap: 26px; height: 25px; padding-bottom: 3px; line-height: 22px; white-space: nowrap; }
.second { gap: 25px; }
.docbtns { position: absolute; right: 4px; top: 6px; display: flex; gap: 4px; }
.docbtns svg { width: 12px; height: 12px; stroke: #222; }

/* toolbars */
.bar { display: flex; height: 26px; padding-bottom: 3px; background: #555; overflow: hidden; }
.strip { display: flex; flex: none; background: #ececec; }
.strip button { width: 22px; }
.strip button.mini { width: 12px; }
.strip button.wide { width: 24px; }
.strip svg, .tools svg, .toggles svg { width: 20px; height: 20px; stroke: #4c5157; }
.strip svg.small { width: 17px; height: 17px; }
.sep { width: 7px; border-left: 3px solid #ececec; border-right: 3px solid #ececec; background: #9a9a9a; }
.grip { width: 8px; margin: 1px 1px 1px 0; background: repeating-linear-gradient(90deg, #333 0 1px, #777 1px 3px); }
.bar .grip ~ .grip { margin: 1px 1px 1px 2px; }
.combo { position: relative; display: flex; align-items: center; flex: none; border: 1px solid #999; border-radius: 2px; background: linear-gradient(#fafafa, #dcdcdc); }
.combo::after { content: ""; position: absolute; right: 4px; top: 8px; border: 5px solid transparent; border-top: 6px solid #111; border-bottom: 0; pointer-events: none; }
.combo select { appearance: none; flex: 1; min-width: 0; height: 20px; margin: 0; padding: 0 20px 0 8px; border: 0; background: none; color: #222; font: inherit; line-height: 20px; }
.combo select.mid { text-align: center; text-align-last: center; padding: 0 20px 0 4px; }
.combo select.tight { padding-left: 3px; }
.combo select.serif { padding-left: 2px; font-family: "Liberation Serif", serif; font-size: 16px; }
.style { width: 115px; }
.workspace-name { width: 169px; }
.layer { width: 289px; }
.layer-icons { display: flex; align-items: center; }
.combo.layer select { padding-left: 2px; }
.swatch { width: 11px; height: 11px; border: 1px solid #333; background: #fff; }
.color { width: 145px; padding-left: 4px; }
.ltype, .lweight { width: 155px; padding-left: 4px; }
.rule { width: 58px; height: 1px; background: #222; }
.lweight .rule { width: 33px; }
.ltype select.serif, .lweight select.serif { padding-left: 3px; }

/* work area */
.work { flex: 1; display: flex; min-height: 0; padding: 1px 0 5px; background: #666; }
.side { width: 24px; margin-right: 5px; flex: none; }
.right { margin: 0 3px 0 4px; }
.palette { background: #efefef; border-left: 1px solid #444; border-right: 1px solid #444; }
.handle { height: 8px; border-top: 2px solid #777; background: repeating-linear-gradient(90deg, #3c3c3c 0 1px, #4c4c4c 1px 3px); }
.tools button { width: 22px; height: 21px; }
.tools button:nth-child(3n) { margin-bottom: 1px; }
.document { flex: 1; min-width: 0; display: flex; flex-direction: column; border-right: 2px solid #f5f5f5; border-top: 2px solid #444; }
.canvas { flex: 1; position: relative; overflow: hidden; background: #000; border-left: 1px solid #888; }
.drawing { position: absolute; width: 100%; height: 100%; }
.gridlines { stroke: #151515; }
.major { stroke: #303236; }
.rings { stroke: #fff; stroke-width: 1.200; }
.dots { fill: #fff; }
.ucs { position: absolute; left: 0; bottom: 6px; width: 84px; height: 76px; stroke: #ddd; }
.viewlabel { position: absolute; left: 3px; top: 5px; display: flex; color: #e6e6e6; font-size: 12px; line-height: 16px; }
.compass { position: absolute; right: 11px; top: 9px; width: 86px; height: 88px; display: grid; grid-template: 16px 1fr 16px / 14px 1fr 14px; place-items: center; color: #aaa; font-size: 13px; line-height: 16px; }
.compass::before { content: ""; position: absolute; left: 4px; top: 5px; width: 78px; height: 78px; border: 9px solid #2d2d2d; border-radius: 50%; }
.compass span { position: relative; }
.compass .n, .compass .s { grid-column: 1 / 4; }
.cube { width: 33px; height: 33px; border: 1px solid #ccc; background: #a6a7a9; }
.cube svg { width: 32px; height: 32px; stroke: #444; }
.wcs { position: absolute; right: 32px; top: 111px; width: 47px; height: 17px; gap: 6px; border: 1px solid #aaa; border-radius: 4px; background: #77777c; color: #bdbdc0; font-size: 11px; font-family: "Liberation Sans", sans-serif; }
.wcs svg { width: 8px; height: 5px; stroke: #aaa; }

.tabs { display: flex; height: 19px; background: #f0f0f0; border-left: 1px solid #888; }
.nav { width: 18px; border-right: 1px solid #bbb; }
.nav svg { width: 12px; height: 12px; fill: #666; }
.tab { position: relative; width: 56px; font-size: 14px; line-height: 18px; padding-right: 8px; }
.tab.active { background: #000; color: #fff; clip-path: polygon(0 0, 100% 0, 84% 100%, 11% 100%); padding-right: 4px; margin-right: -2px; }
.tab:not(.active)::after { content: ""; position: absolute; right: 2px; top: 0; height: 100%; border-right: 1px solid #555; transform: skewX(-22deg); }

/* command line */
.command { position: relative; display: flex; height: 96px; border-bottom: 1px solid #444; }
.cmd-side { width: 28px; display: flex; flex-direction: column; align-items: center; gap: 8px; background: linear-gradient(#9a9a9a, #4c4c4c); }
.cmd-side svg { width: 18px; height: 18px; }
.dots-handle { width: 22px; height: 7px; margin: 5px 0 -2px; border-top: 2px dotted #bbb; border-bottom: 2px dotted #bbb; }
.cmd-main { flex: 1; display: flex; flex-direction: column; min-width: 0; }
.log { flex: 1; padding: 21px 4px 0 3px; background: #c8c8c8; color: #111; font: 18px/22px "DejaVu Sans Mono", "Noto Sans CJK SC", monospace; white-space: nowrap; overflow: hidden; }
.log p { margin: 0; }
.prompt { display: flex; align-items: center; height: 27px; padding: 0 0 2px 6px; gap: 8px; background: #fff; }
.recent svg { width: 32px; height: 18px; }
.prompt input { flex: 1; min-width: 0; height: 24px; border: 0; padding: 0; outline: 0; font: italic 18px/24px "Noto Sans", "Noto Sans CJK SC", sans-serif; }
.prompt input::placeholder { color: #a8a8a8; }
.brand { position: absolute; z-index: 3; right: 51px; top: 18px; width: 180px; height: 84px; display: flex; align-items: center; gap: 12px; padding-left: 14px; background: #233058; color: #d3d8e6; }
.brand svg { width: 36px; height: 38px; flex: none; }
.brand b { display: block; font-size: 26px; line-height: 30px; font-weight: 700; }
.brand small { display: block; font: 500 12px/14px Inter, sans-serif; }

/* status bar */
.status { display: flex; height: 23px; background: linear-gradient(#8c8c8c, #707070); color: #151515; }
.coords { width: 263px; padding-left: 11px; font: 13px/23px "Liberation Mono", monospace; background: linear-gradient(#999, #777); white-space: nowrap; }
.toggles { display: flex; }
.toggles button { width: 21px; background: linear-gradient(#bcbcbc, #959595); border-right: 1px solid #777; }
.toggles button:nth-child(3n) { margin-right: 1px; }
.toggles button.on { background: linear-gradient(#e4f2f7, #a7d2df); }
.toggles button.wide { width: 30px; }
.toggles .pale { fill: #f4f4f4; }
.status-right { display: flex; margin-left: auto; align-items: stretch; }
.status-right .toggles { margin-right: 4px; }
.status-right .space { margin-right: 23px; }
.scale { width: 44px; font: 14px/23px "DejaVu Sans", sans-serif; }
.scale svg, .full svg { width: 18px; height: 18px; stroke: #555; }
.full { width: 20px; }
.resize { width: 20px; height: 14px; margin-top: 9px; background: repeating-linear-gradient(90deg, #ccc 0 2px, transparent 2px 4px); clip-path: polygon(100% 0, 100% 100%, 30% 100%); }
```
